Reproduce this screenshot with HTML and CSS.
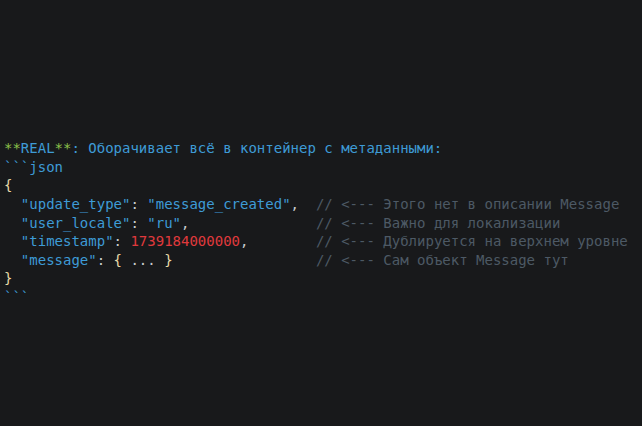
FILE: index.html
```html
<!DOCTYPE html>
<html>
<head>
<meta charset="utf-8">
<link rel="stylesheet" href="styles.css">
</head>
<body>
<pre class="code"><span class="g">**</span><span class="b">REAL</span><span class="g">**</span><span class="b">: Оборачивает всё в контейнер с метаданными:</span>
<span class="b">```json</span>
<span class="y">{</span>
  <span class="b">"update_type"</span><span class="p">: </span><span class="b">"message_created"</span><span class="p">,  </span><span class="c">// &lt;--- Этого нет в описании Message</span>
  <span class="b">"user_locale"</span><span class="p">: </span><span class="b">"ru"</span><span class="p">,               </span><span class="c">// &lt;--- Важно для локализации</span>
  <span class="b">"timestamp"</span><span class="p">: </span><span class="r">1739184000000</span><span class="p">,        </span><span class="c">// &lt;--- Дублируется на верхнем уровне</span>
  <span class="b">"message"</span><span class="p">: </span><span class="y">{</span><span class="p"> ... </span><span class="y">}</span>                 <span class="c">// &lt;--- Сам объект Message тут</span>
<span class="y">}</span>
<span class="b">```</span></pre>
</body>
</html>
```
FILE: styles.css
```css
html, body {
  margin: 0;
  padding: 0;
  background: #18191b;
  height: 100%;
}
.code {
  margin: 0;
  padding: 139px 0 0 4px;
  font-family: "DejaVu Sans Mono", monospace;
  font-size: 14px;
  line-height: 18.62px;
  color: #d4d4d4;
}
.b { color: #3e9bd6; }
.g { color: #8cc34b; }
.p { color: #c9ccd0; }
.y { color: #e8d9a8; }
.r { color: #e0393d; }
.c { color: #4d5965; }
```
